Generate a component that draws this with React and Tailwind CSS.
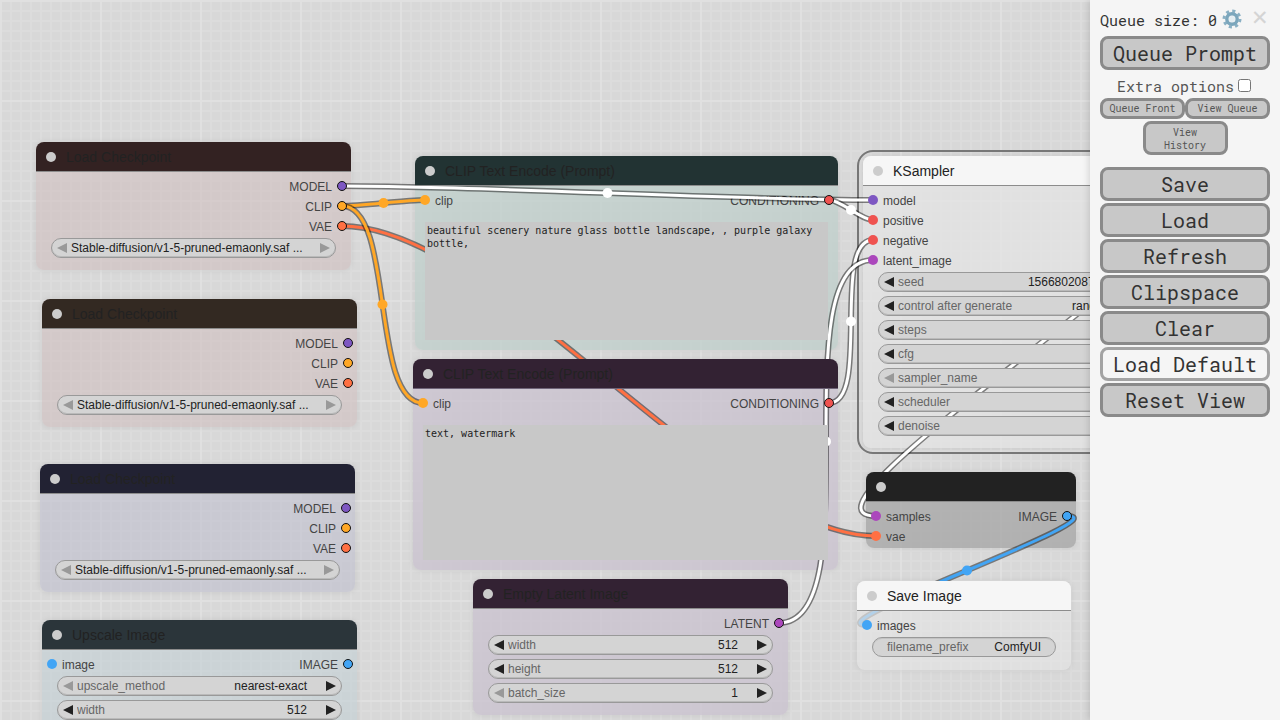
import React from "react";

const mono = "font-['Roboto_Mono','DejaVu_Sans_Mono',monospace]";

function Link({ a, b, color }) {
  const dist = Math.hypot(b[0] - a[0], b[1] - a[1]);
  const c = dist * 0.25;
  const d = `M${a[0]} ${a[1]} C${a[0] + c} ${a[1]} ${b[0] - c} ${b[1]} ${b[0]} ${b[1]}`;
  const mx = (a[0] + 3 * (a[0] + c) + 3 * (b[0] - c) + b[0]) / 8;
  const my = (a[1] + b[1]) / 2;
  return (
    <g fill="none">
      <path d={d} stroke="#000" strokeOpacity="0.45" strokeWidth="6" />
      <path d={d} stroke={color} strokeWidth="3" />
      <circle cx={mx} cy={my} r="5" fill={color} />
    </g>
  );
}

function Node({ className, titleBg, title, titleText = "text-[#222]", line = "border-[#8c8c8c]", children }) {
  return (
    <div className={`absolute rounded-[8px] shadow-[0_0_6px_rgba(0,0,0,0.08)] font-['Liberation_Sans',Arial,sans-serif] ${className}`}>
      <div className={`relative z-20 flex h-[30px] items-center rounded-t-[8px] border-b pl-[10px] text-[14px] ${titleBg} ${titleText} ${line}`}>
        <span className="h-[10px] w-[10px] rounded-full bg-[#cccccc]" />
        <span className="ml-[10px] translate-y-[1px] whitespace-nowrap">{title}</span>
      </div>
      {children}
    </div>
  );
}

function Dot({ color, side }) {
  return (
    <span
      className={
        side === "in"
          ? "absolute left-[5px] top-[5px] z-20 h-[10px] w-[10px] rounded-full"
          : "absolute right-[4px] top-[5px] z-20 h-[10px] w-[10px] rounded-full border border-[#111]"
      }
      style={{ backgroundColor: color }}
    />
  );
}

const T = { model: "#7e57c2", clip: "#ffa726", vae: "#ff7043", cond: "#ef5350", latent: "#ab47bc", image: "#42a5f5" };

function Row({ input, output, inColor, outColor }) {
  return (
    <div className="relative flex h-[20px] items-center justify-between pl-[20px] pr-[19px] text-[12px] text-[#444]">
      {input && <Dot color={inColor} side="in" />}
      <span className="translate-y-[1px]">{input}</span>
      <span className="translate-y-[1px]">{output}</span>
      {output && <Dot color={outColor} side="out" />}
    </div>
  );
}

function Arrow({ dir, dim }) {
  return (
    <svg width="10" height="12" viewBox="0 0 10 12" className="shrink-0">
      <path d={dir === "l" ? "M10 1V11L0 6Z" : "M0 1V11L10 6Z"} fill={dim ? "#999999" : "#222222"} />
    </svg>
  );
}

function Widget({ label, value, leftDim, rightDim, plain }) {
  if (plain) {
    return (
      <div className="relative z-20 mx-[15px] flex h-[20px] items-center justify-between rounded-full border border-[#999] bg-[#d4d4d4] px-[14px] text-[12px] shadow-[inset_0_1px_0_rgba(0,0,0,0.08)]">
        <span className="text-[#666]">{label}</span>
        <span className="text-[#222]">{value}</span>
      </div>
    );
  }
  return (
    <div className="relative z-20 mx-[15px] flex h-[20px] items-center rounded-full border border-[#999] bg-[#d4d4d4] pl-[5px] pr-[5px] text-[12px] shadow-[inset_0_-1px_0_rgba(0,0,0,0.12)]">
      <Arrow dir="l" dim={leftDim} />
      <span className="ml-[4px] flex min-w-0 flex-1 items-center justify-between overflow-hidden whitespace-nowrap pr-[19px]">
        {label && <span className="text-[#666]">{label}</span>}
        {value && <span className="text-[#222]">{value}</span>}
      </span>
      <Arrow dir="r" dim={rightDim} />
    </div>
  );
}

function Btn({ children, light }) {
  return (
    <button
      className={
        light
          ? `h-[34px] w-[170px] rounded-[8px] border-[3px] border-[#a3a3a3] bg-[#f5f5f5] text-[20px] leading-none text-[#333] ${mono}`
          : `h-[34px] w-[170px] rounded-[8px] border-[3px] border-[#8a8a8a] bg-[#c8c8c8] text-[20px] leading-none text-[#333] ${mono}`
      }
    >
      {children}
    </button>
  );
}

function Small({ children, className }) {
  return (
    <button className={`rounded-[8px] border-[3px] border-[#8a8a8a] bg-[#c8c8c8] text-[10px] leading-[13px] text-[#555] ${mono} ${className}`}>
      {children}
    </button>
  );
}

function Gear() {
  return (
    <svg width="20" height="20" viewBox="0 0 20 20" className="shrink-0">
      <circle cx="10" cy="10" r="8" fill="none" stroke="#8ab0c4" strokeWidth="3" strokeDasharray="3.1 3.18" />
      <circle cx="10" cy="10" r="5.2" fill="none" stroke="#7ba6bc" strokeWidth="3.4" />
      <circle cx="10" cy="10" r="3" fill="#e3edf2" />
    </svg>
  );
}

export default function App() {
  return (
    <div className="relative flex h-[720px] w-[1280px] justify-end overflow-hidden bg-[#d8d8d8]">
      <div className="absolute inset-0 bg-[linear-gradient(to_right,#e0e0e0_2px,transparent_2px),linear-gradient(to_bottom,#e0e0e0_2px,transparent_2px),linear-gradient(to_right,#dcdcdc_2px,transparent_2px),linear-gradient(to_bottom,#dcdcdc_2px,transparent_2px)] bg-[size:100px_100px,100px_100px,10px_10px,10px_10px]" />

      <svg className="absolute left-0 top-0 z-10" width="1280" height="720">
        <Link a={[342, 186]} b={[873, 200]} color="#ffffff" />
        <Link a={[342, 226]} b={[876, 536]} color="#ff7043" />
        <Link a={[342, 206]} b={[425, 200]} color="#ffa726" />
        <Link a={[342, 206]} b={[423, 403]} color="#ffa726" />
        <Link a={[829, 200]} b={[873, 220]} color="#ffffff" />
        <Link a={[829, 403]} b={[873, 240]} color="#ffffff" />
        <Link a={[779, 623]} b={[873, 260]} color="#ffffff" />
        <Link a={[1168, 200]} b={[876, 516]} color="#ffffff" />
        <Link a={[1067, 516]} b={[867, 625]} color="#42a5f5" />
      </svg>

      <Node className="left-[36px] top-[142px] w-[315px] bg-[#d1c3c3]/70 pb-[12px]" titleBg="bg-[#332222]" title="Load Checkpoint">
        <div className="pt-[4px]">
          <Row output="MODEL" outColor={T.model} />
          <Row output="CLIP" outColor={T.clip} />
          <Row output="VAE" outColor={T.vae} />
        </div>
        <div className="mt-[2px]">
          <Widget value="Stable-diffusion/v1-5-pruned-emaonly.saf ..." leftDim rightDim />
        </div>
      </Node>

      <Node className="left-[42px] top-[299px] w-[315px] bg-[#d1c3c3]/70 pb-[12px]" titleBg="bg-[#332922]" title="Load Checkpoint">
        <div className="pt-[4px]">
          <Row output="MODEL" outColor={T.model} />
          <Row output="CLIP" outColor={T.clip} />
          <Row output="VAE" outColor={T.vae} />
        </div>
        <div className="mt-[2px]">
          <Widget value="Stable-diffusion/v1-5-pruned-emaonly.saf ..." leftDim rightDim />
        </div>
      </Node>

      <Node className="left-[40px] top-[464px] w-[315px] bg-[#c3c3d0]/70 pb-[12px]" titleBg="bg-[#222233]" title="Load Checkpoint">
        <div className="pt-[4px]">
          <Row output="MODEL" outColor={T.model} />
          <Row output="CLIP" outColor={T.clip} />
          <Row output="VAE" outColor={T.vae} />
        </div>
        <div className="mt-[2px]">
          <Widget value="Stable-diffusion/v1-5-pruned-emaonly.saf ..." leftDim rightDim />
        </div>
      </Node>

      <Node className="left-[42px] top-[620px] w-[315px] bg-[#c6d2d5]/70 pb-[12px]" titleBg="bg-[#2b353a]" title="Upscale Image">
        <div className="pt-[4px]">
          <Row input="image" output="IMAGE" inColor={T.image} outColor={T.image} />
        </div>
        <div className="mt-[2px] flex flex-col gap-[4px]">
          <Widget label="upscale_method" value="nearest-exact" leftDim />
          <Widget label="width" value="512" />
        </div>
      </Node>

      <Node className="left-[415px] top-[156px] w-[423px] bg-[#c1cfcc]/80 pb-[10px]" titleBg="bg-[#223333]" title="CLIP Text Encode (Prompt)">
        <div className="pt-[4px]">
          <Row input="clip" output="CONDITIONING" inColor={T.clip} outColor={T.cond} />
        </div>
        <div className={`relative z-20 mx-[10px] mt-[12px] h-[118px] bg-[#c8c8c8] px-[2px] pt-[2px] font-['DejaVu_Sans_Mono',monospace] text-[10px] leading-[13px] text-[#222]`}>
          beautiful scenery nature glass bottle landscape, , purple galaxy bottle,
        </div>
      </Node>

      <Node className="left-[413px] top-[359px] w-[425px] bg-[#cbc3cf]/80 pb-[10px]" titleBg="bg-[#332233]" title="CLIP Text Encode (Prompt)" line="border-[#6f6478]">
        <div className="pt-[4px]">
          <Row input="clip" output="CONDITIONING" inColor={T.clip} outColor={T.cond} />
        </div>
        <div className={`relative z-20 mx-[10px] mt-[12px] h-[135px] bg-[#c8c8c8] px-[2px] pt-[2px] font-['DejaVu_Sans_Mono',monospace] text-[10px] leading-[13px] text-[#222]`}>
          text, watermark
        </div>
      </Node>

      <Node className="left-[473px] top-[579px] w-[315px] bg-[#cbc3cf]/80 pb-[12px]" titleBg="bg-[#332233]" title="Empty Latent Image">
        <div className="pt-[4px]">
          <Row output="LATENT" outColor={T.latent} />
        </div>
        <div className="mt-[2px] flex flex-col gap-[4px]">
          <Widget label="width" value="512" />
          <Widget label="height" value="512" />
          <Widget label="batch_size" value="1" leftDim />
        </div>
      </Node>

      <Node className="left-[863px] top-[156px] w-[315px] bg-[#e3e3e3]/80 pb-[12px]" titleBg="bg-[#f6f6f6]" title="KSampler">
        <div className="absolute -inset-[6px] rounded-[16px] border-2 border-[#777]" />
        <div className="pt-[4px]">
          <Row input="model" inColor={T.model} />
          <Row input="positive" inColor={T.cond} />
          <Row input="negative" inColor={T.cond} />
          <Row input="latent_image" inColor={T.latent} />
        </div>
        <div className="mt-[2px] flex flex-col gap-[4px]">
          <Widget label="seed" value="156680208700286" />
          <Widget label="control after generate" value="randomize" />
          <Widget label="steps" />
          <Widget label="cfg" />
          <Widget label="sampler_name" leftDim />
          <Widget label="scheduler" />
          <Widget label="denoise" />
        </div>
      </Node>

      <Node className="left-[866px] top-[472px] w-[210px] bg-[#a8a8a8]/80 pb-[2px]" titleBg="bg-[#222222]" title="VAE Decode">
        <div className="pt-[4px]">
          <Row input="samples" output="IMAGE" inColor={T.latent} outColor={T.image} />
          <Row input="vae" inColor={T.vae} />
        </div>
      </Node>

      <Node className="left-[857px] top-[581px] z-[15] w-[214px] bg-[#e4e4e4]/70 pb-[13px]" titleBg="bg-[#f6f6f6]" title="Save Image">
        <div className="pt-[4px]">
          <Row input="images" inColor={T.image} />
        </div>
        <div className="mt-[2px]">
          <Widget label="filename_prefix" value="ComfyUI" plain />
        </div>
      </Node>

      <aside className={`relative z-30 flex h-[720px] w-[190px] flex-col items-center bg-[#f5f5f5] shadow-[-2px_0_6px_rgba(0,0,0,0.12)] ${mono}`}>
        <div className="flex h-[36px] w-full items-center pl-[10px] pt-[4px] text-[15px] text-[#333]">
          <span className="whitespace-nowrap">Queue size: 0</span>
          <span className="ml-[5px] -translate-y-[1px]"><Gear /></span>
          <span className="ml-[9px] -translate-y-[2px] font-['DejaVu_Sans',sans-serif] text-[21px] font-bold leading-none text-[#d4d4d4]">✕</span>
        </div>
        <Btn>Queue Prompt</Btn>
        <div className="flex h-[28px] -translate-x-[1px] items-center pt-[4px] text-[15px] text-[#555]">
          <span>Extra options</span>
          <input type="checkbox" className="ml-[4px] h-[13px] w-[13px] -translate-y-[1px]" />
        </div>
        <div className="flex w-[170px]">
          <Small className="h-[21px] w-[85px]">Queue Front</Small>
          <Small className="h-[21px] w-[85px]">View Queue</Small>
        </div>
        <Small className="mt-[2px] h-[34px] w-[85px] px-[8px] pt-[2px]">View History</Small>
        <div className="mt-[12px] flex flex-col gap-[2px]">
          <Btn>Save</Btn>
          <Btn>Load</Btn>
          <Btn>Refresh</Btn>
          <Btn>Clipspace</Btn>
          <Btn>Clear</Btn>
          <Btn light>Load Default</Btn>
          <Btn>Reset View</Btn>
        </div>
      </aside>
    </div>
  );
}
